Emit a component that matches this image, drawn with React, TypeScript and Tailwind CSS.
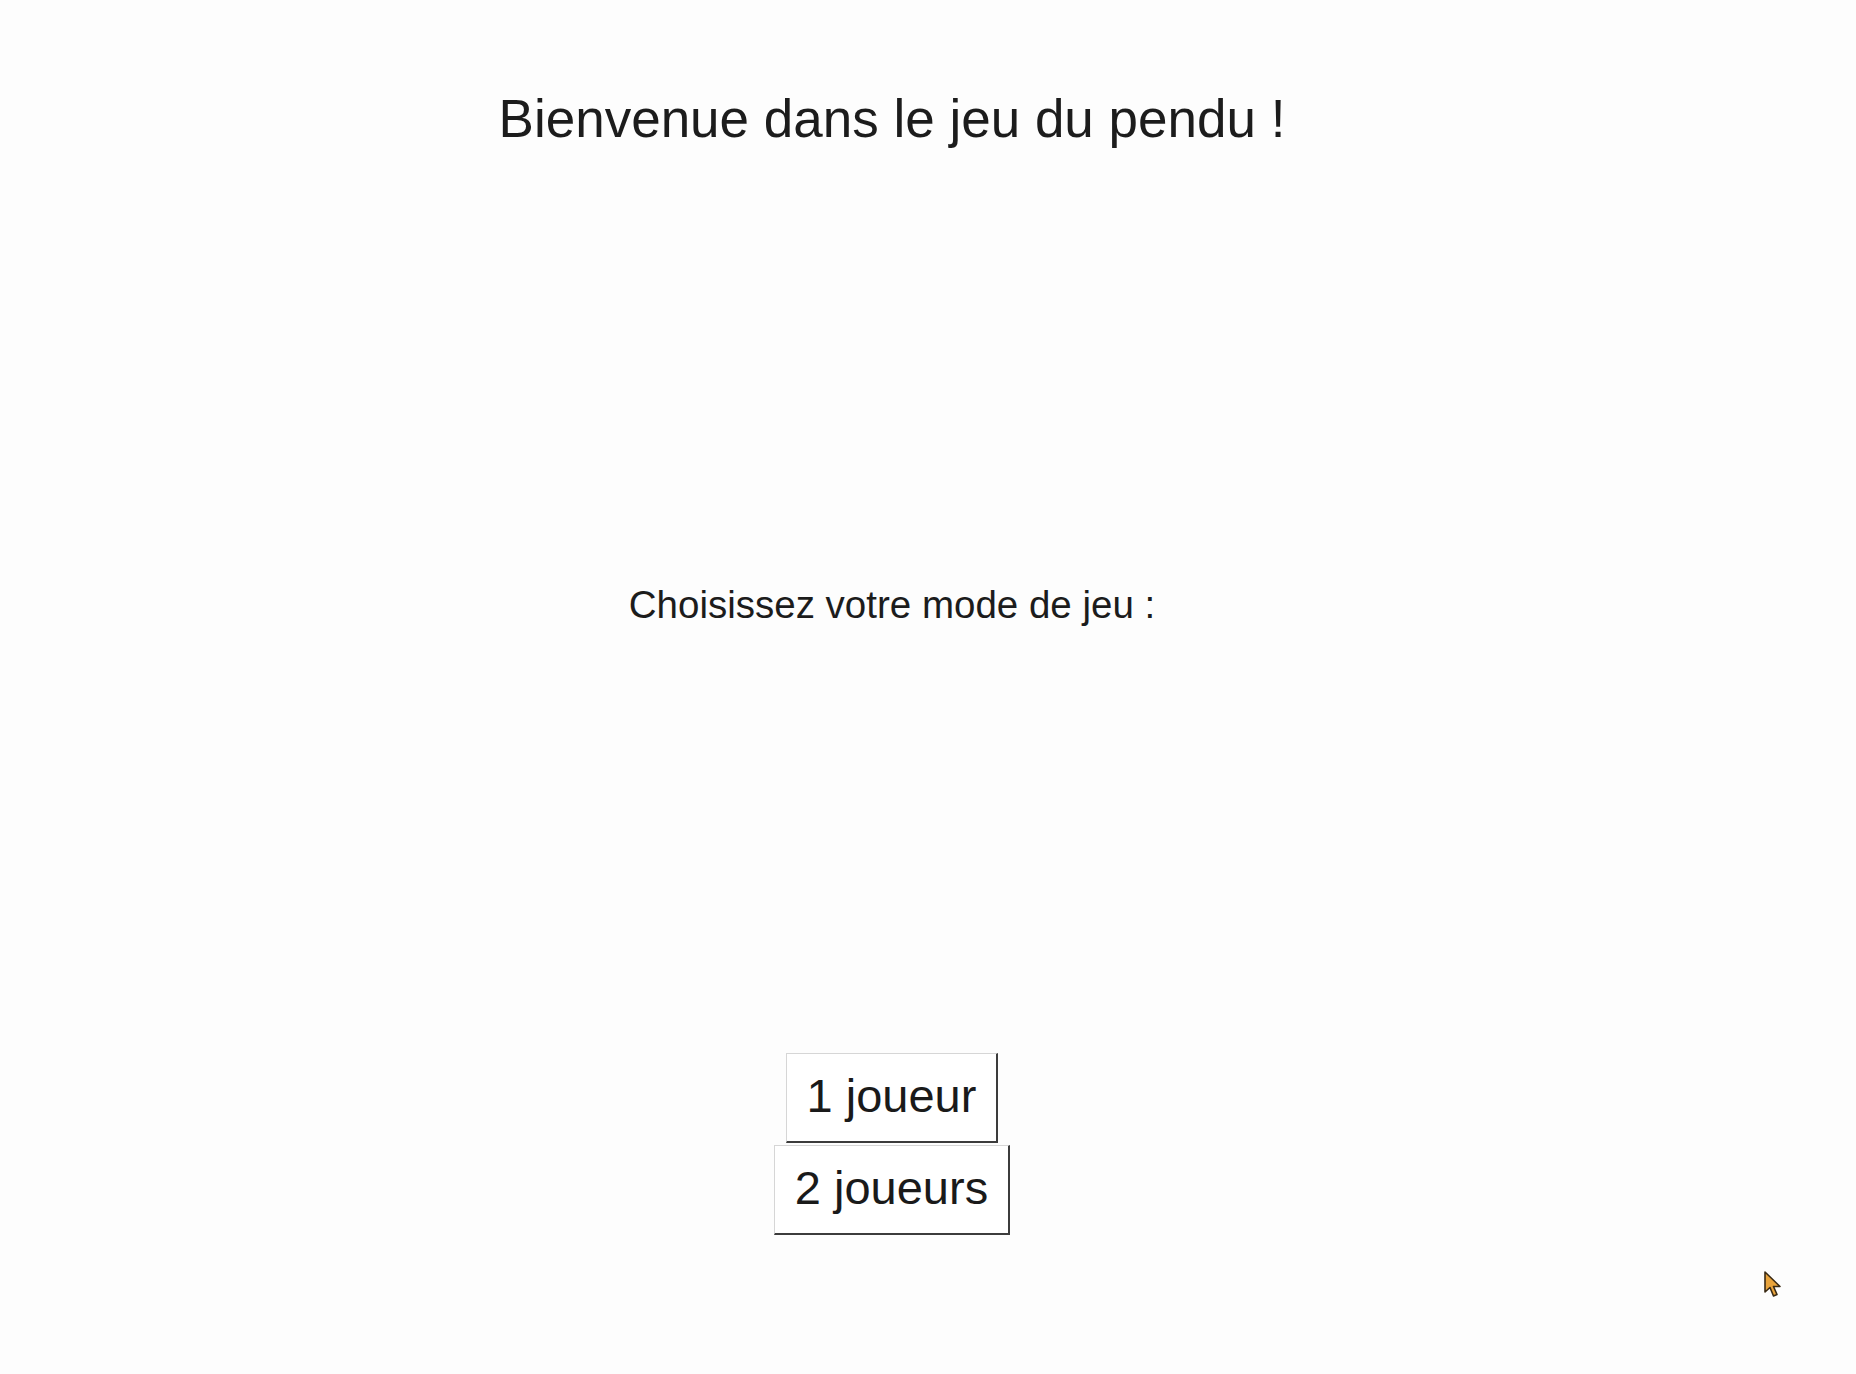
import React from "react";

function Cursor() {
  return (
    <svg
      className="absolute left-[1763px] top-[1270px]"
      width="22"
      height="30"
      viewBox="0 0 22 30"
    >
      <path
        d="M2 2 L2 22 L7 17.5 L10.5 26 L14 24.5 L10.5 16.5 L17 16.5 Z"
        fill="#e9a43c"
        stroke="#3a2a14"
        strokeWidth="1.6"
        strokeLinejoin="round"
      />
    </svg>
  );
}

export default function App() {
  const btn =
    "bg-white border-t border-l border-t-[#d6d6d6] border-l-[#d6d6d6] border-r-2 border-b-2 border-r-[#3c3c3c] border-b-[#3c3c3c] px-[20px] pt-[15px] pb-[18px] text-[47px] leading-[54px] text-[#1a1a1a]";

  return (
    <div className="relative min-h-screen bg-[#fdfdfd] font-['Liberation_Sans',Arial,sans-serif] text-[#1c1c1c] overflow-hidden">
      <div className="w-[1784px] flex flex-col items-center">
        <h1 className="mt-[89px] text-[53px] leading-[60px] font-normal">
          Bienvenue dans le jeu du pendu !
        </h1>

        <p className="mt-[433px] text-[38.5px] leading-[45px]">
          Choisissez votre mode de jeu :
        </p>

        <div className="mt-[426px] flex flex-col items-center gap-[2px]">
          <button className={btn}>1 joueur</button>
          <button className={btn}>2 joueurs</button>
        </div>
      </div>

      <Cursor />
    </div>
  );
}
